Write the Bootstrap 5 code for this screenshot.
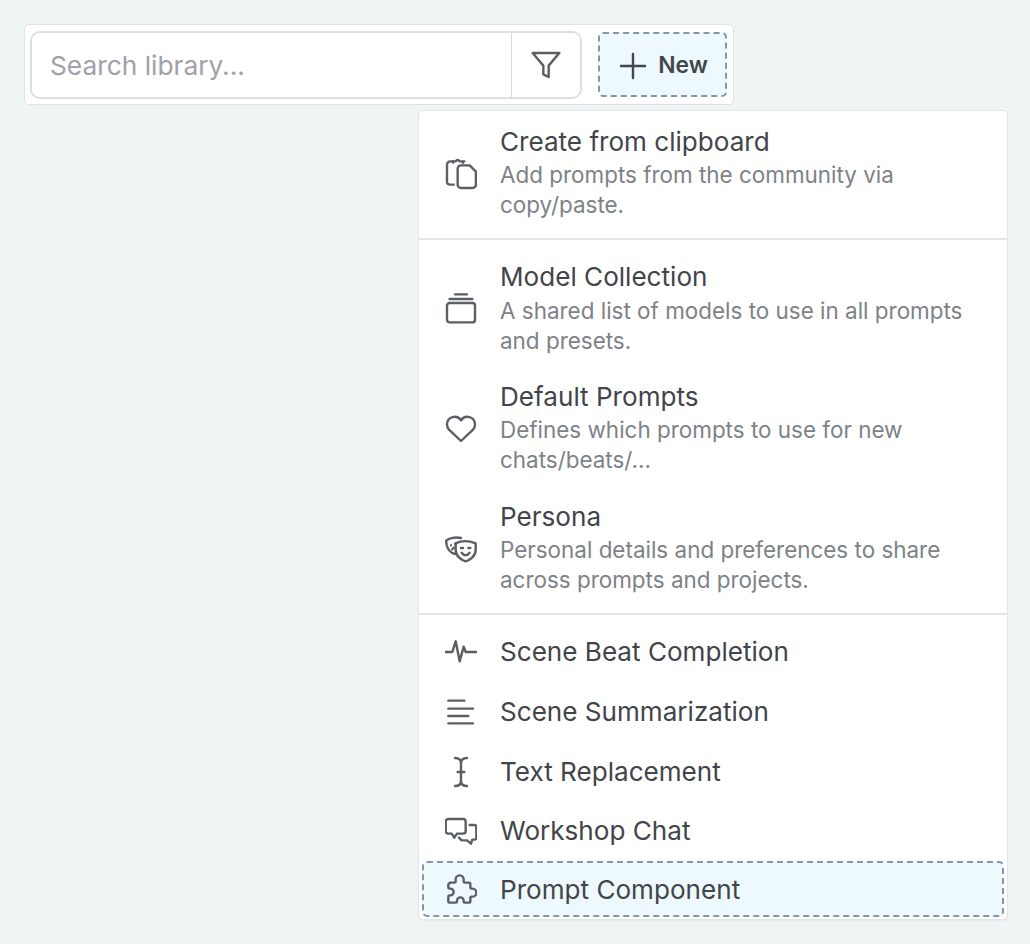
<!DOCTYPE html>
<html lang="en">
<head>
  <meta charset="UTF-8">
  <title>Library</title>
  <meta name="viewport" content="width=device-width, initial-scale=1">
  <link href="https://cdn.jsdelivr.net/npm/bootstrap@5.3.0/dist/css/bootstrap.min.css" rel="stylesheet">
  <style>
    body {
      background-color: #eff5f4;
      font-family: "Inter", "Liberation Sans", sans-serif;
      color: #3c4045;
      height: 944px;
      overflow: hidden;
    }
    .page-wrap {
      position: relative;
      width: 1030px;
      height: 944px;
      padding: 24px;
    }
    .lib-bar {
      width: 710px;
      height: 81px;
      padding: 5px;
      gap: 16px;
      background: #fff;
      border: 1px solid #dfe3e5;
      border-radius: 5px;
    }
    .lib-search {
      width: 552px;
      height: 68px;
      border: 2px solid #dcdfe2;
      border-radius: 10px;
      overflow: hidden;
      background: #fff;
    }
    .lib-search input {
      border: 0;
      outline: 0;
      flex: 1 1 auto;
      min-width: 0;
      padding: 3px 18px 0;
      font-size: 26.3px;
      color: #3c4045;
    }
    .lib-search input::placeholder {
      color: #a0a1a8;
      opacity: 1;
    }
    .lib-filter {
      width: 69px;
      border: 0;
      border-left: 1px solid #d8dbde;
      border-radius: 0;
      padding: 0;
      background: #fff;
    }
    .lib-new {
      width: 129px;
      height: 65px;
      padding: 2px 0 0;
      gap: 9px;
      font-size: 22.8px;
      font-weight: 600;
      color: #41474d;
      background: #eef9fd;
      border: 2px dashed #8497a9;
      border-radius: 5px;
    }
    .lib-menu {
      position: absolute;
      left: 418px;
      top: 110px;
      width: 590px;
      height: 810px;
      padding: 4.5px 3px 3px;
      gap: 3.7px;
      border: 1px solid #e2e6e8;
      border-radius: 5px;
      box-shadow: 0 1px 2px rgba(0, 0, 0, .05);
    }
    .lib-menu .dropdown-divider {
      border-top: 2px solid #e3e5e7;
      opacity: 1;
    }
    .lib-menu .divider-one {
      margin: 2.8px -3px 7.3px;
    }
    .lib-menu .divider-two {
      margin: 3.3px -3px 5.3px;
    }
    .lib-item {
      display: flex;
      align-items: center;
      gap: 23px;
      height: 56px;
      padding: 0 22px;
      flex: 0 0 auto;
      font-size: 26.1px;
      line-height: 30px;
      color: #41454a;
      border: 1px solid transparent;
      border-radius: 5px;
      white-space: normal;
    }
    .lib-item.two-line {
      height: 116px;
    }
    .lib-item.focused {
      margin-top: -2.2px;
      padding: 2.4px 20px 0 21px;
      background: #eef9fd;
      border: 2px dashed #8497a9;
    }
    .lib-title {
      display: block;
      line-height: 34px;
      margin-top: -2px;
      margin-bottom: 1.6px;
    }
    .lib-desc {
      display: block;
      font-size: 22.45px;
      line-height: 30px;
      color: #7e8286;
    }
    .lib-ico {
      flex: 0 0 32px;
      width: 32px;
      height: 32px;
      fill: none;
      stroke: #5b5e62;
      stroke-width: 1.8;
      stroke-linecap: round;
      stroke-linejoin: round;
    }
    .lib-new .lib-ico {
      stroke: #41474d;
    }
  </style>
</head>
<body>
  <div class="page-wrap">
    <div class="lib-bar d-flex align-items-center">
      <div class="lib-search d-flex">
        <input type="text" placeholder="Search library...">
        <button class="btn lib-filter d-flex align-items-center justify-content-center" type="button" aria-label="Filter">
          <svg class="lib-ico" viewBox="0 0 24 24"><path d="M22 3H2l8 9.46V19l4 2v-8.54L22 3z"/></svg>
        </button>
      </div>
      <button class="btn lib-new d-flex align-items-center justify-content-center" type="button">
        <svg class="lib-ico" viewBox="0 0 24 24"><path d="M12 3v18M3 12h18"/></svg>
        New
      </button>
    </div>

    <div class="dropdown-menu show d-flex flex-column lib-menu">
      <a class="lib-item two-line text-decoration-none" href="#">
        <svg class="lib-ico" viewBox="0 0 24 24"><path d="M6.500 20H3.500a2 2 0 0 1-2-2V5a2.500 2.500 0 0 1 2.500-2.500H6"/><path d="M6 3.500v-1h2q1.500-2 3 0h2.500v1M13.500 2.500h1"/><path d="M9.500 8a2.500 2.500 0 0 1 2.500-2.500h6.500l4.700 4.700v9.800a2.500 2.500 0 0 1-2.500 2.500H12a2.500 2.500 0 0 1-2.500-2.500z"/></svg>
        <span>
          <span class="lib-title">Create from clipboard</span>
          <span class="lib-desc">Add prompts from the community via copy/paste.</span>
        </span>
      </a>
      <hr class="dropdown-divider divider-one">
      <a class="lib-item two-line text-decoration-none" href="#">
        <svg class="lib-ico" viewBox="0 0 24 24"><path d="M7.500 1h9M3.500 4.500h17"/><rect x="1.500" y="7.500" width="21" height="14.500" rx="2"/></svg>
        <span>
          <span class="lib-title">Model Collection</span>
          <span class="lib-desc">A shared list of models to use in all prompts and presets.</span>
        </span>
      </a>
      <a class="lib-item two-line text-decoration-none" href="#">
        <svg class="lib-ico" viewBox="0 0 24 24"><path d="M12 21L3 12.500A6 6 0 0 1 1.500 8.500 5.700 5.700 0 0 1 12 5.500 5.700 5.700 0 0 1 22.500 8.500 6 6 0 0 1 21 12.500z"/></svg>
        <span>
          <span class="lib-title">Default Prompts</span>
          <span class="lib-desc">Defines which prompts to use for new chats/beats/...</span>
        </span>
      </a>
      <a class="lib-item two-line text-decoration-none" href="#">
        <svg class="lib-ico" viewBox="0 0 24 24"><path d="M7.500 16.500C4 15.500 1.800 13 1.200 9.500L.8 6.500C3 4.500 8 3.500 12 4.500"/><path d="M4.500 10h.01M7.500 9h.01M5.500 13c.5-1 1.200-1.500 2-1.500"/><path d="M8 8.500C12 6.500 18 6.500 23 8.500v5c0 4.500-4 7.500-7.500 8.500-3.500-1-7.500-4-7.500-8.500z"/><path d="M12 12h1.500M17.500 12h1.500M12.500 15.500c1.500 2.500 4.500 2.500 6 0"/></svg>
        <span>
          <span class="lib-title">Persona</span>
          <span class="lib-desc">Personal details and preferences to share across prompts and projects.</span>
        </span>
      </a>
      <hr class="dropdown-divider divider-two">
      <a class="lib-item text-decoration-none" href="#">
        <svg class="lib-ico" viewBox="0 0 24 24"><path d="M0 12h5.500l2.500 -8l3 15l3 -11l1.500 4h8"/></svg>
        Scene Beat Completion
      </a>
      <a class="lib-item text-decoration-none" href="#">
        <svg class="lib-ico" viewBox="0 0 24 24"><path d="M2.500 3.500h12M2.500 9.500h18.500M2.500 15h15M2.500 20.500h18.500"/></svg>
        Scene Summarization
      </a>
      <a class="lib-item text-decoration-none" href="#">
        <svg class="lib-ico" viewBox="0 0 24 24"><path d="M9.500 12h5M7.500 1.500c3 0 4.500 1.500 4.500 4v13c0 2.500-1.500 4-4.500 4M16.500 1.500c-3 0-4.500 1.500-4.500 4v13c0 2.500 1.500 4 4.500 4"/></svg>
        Text Replacement
      </a>
      <a class="lib-item text-decoration-none" href="#">
        <svg class="lib-ico" viewBox="0 0 24 24"><path d="M2.500 3h11a2 2 0 0 1 2 2v7a2 2 0 0 1-2 2H9l-2 3-2-3H2.500a2 2 0 0 1-2-2V5a2 2 0 0 1 2-2z"/><path d="M18.500 7.500H22a1.500 1.500 0 0 1 1.500 1.500v8a1.500 1.500 0 0 1-1.500 1.500h-1.500l-1 3-3-2.500H12.500l-2-2"/></svg>
        Workshop Chat
      </a>
      <a class="lib-item focused text-decoration-none" href="#">
        <svg class="lib-ico" viewBox="0 0 24 24"><path d="M3.500 6.500h3.500a1 1 0 0 0 1-1v-1.500a3 3 0 0 1 6 0v1.500a1 1 0 0 0 1 1h3a1 1 0 0 1 1 1v2.500a1 1 0 0 0 1 1h.5a3 3 0 0 1 0 6h-.5a1 1 0 0 0-1 1v2.500a1 1 0 0 1-1 1h-3a1 1 0 0 1-1-1v-.5a2.500 2.500 0 0 0-5 0v.5a1 1 0 0 1-1 1H3.500a1 1 0 0 1-1-1v-3.500a1 1 0 0 1 1-1h.5a2.500 2.500 0 0 0 0-5h-.5a1 1 0 0 1-1-1v-2a1 1 0 0 1 1-1z"/></svg>
        Prompt Component
      </a>
    </div>
  </div>
  <script src="https://cdn.jsdelivr.net/npm/bootstrap@5.3.0/dist/js/bootstrap.bundle.min.js"></script>
</body>
</html>
